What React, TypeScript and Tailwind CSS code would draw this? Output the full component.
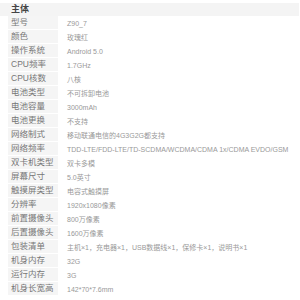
import React from "react";

const SPECS: [string, string][] = [
  ["型号", "Z90_7"],
  ["颜色", "玫瑰红"],
  ["操作系统", "Android 5.0"],
  ["CPU频率", "1.7GHz"],
  ["CPU核数", "八核"],
  ["电池类型", "不可拆卸电池"],
  ["电池容量", "3000mAh"],
  ["电池更换", "不支持"],
  ["网络制式", "移动联通电信的4G3G2G都支持"],
  ["网络频率", "TDD-LTE/FDD-LTE/TD-SCDMA/WCDMA/CDMA 1x/CDMA EVDO/GSM"],
  ["双卡机类型", "双卡多模"],
  ["屏幕尺寸", "5.0英寸"],
  ["触摸屏类型", "电容式触摸屏"],
  ["分辨率", "1920x1080像素"],
  ["前置摄像头", "800万像素"],
  ["后置摄像头", "1600万像素"],
  ["包装清单", "主机×1，充电器×1，USB数据线×1，保修卡×1，说明书×1"],
  ["机身内存", "32G"],
  ["运行内存", "3G"],
  ["机身长宽高", "142*70*7.6mm"],
];

export default function App() {
  return (
    <div className="w-[300px] h-[300px] bg-white pt-[3px] overflow-hidden font-['Liberation_Sans','Noto_Sans_CJK_SC',sans-serif]">
      {/* section title */}
      <div className="h-[13px] w-[299px] bg-[#f4f4f4] pl-[11px] flex items-center text-[9px] font-bold text-[#444] leading-none">
        主体
      </div>

      {/* spec rows */}
      <div className="flex flex-col">
        {SPECS.map(([label, value]) => (
          <div key={label} className="flex h-[14px]">
            <div className="w-[50px] ml-[8px] bg-[#f5f5f5] border-b border-white pl-[3px] flex items-center text-[8.5px] text-[#777] leading-none whitespace-nowrap">
              {label}
            </div>
            <div className="pl-[9px] flex items-center text-[7px] text-[#999] leading-none whitespace-nowrap">
              {value}
            </div>
          </div>
        ))}
      </div>
    </div>
  );
}
